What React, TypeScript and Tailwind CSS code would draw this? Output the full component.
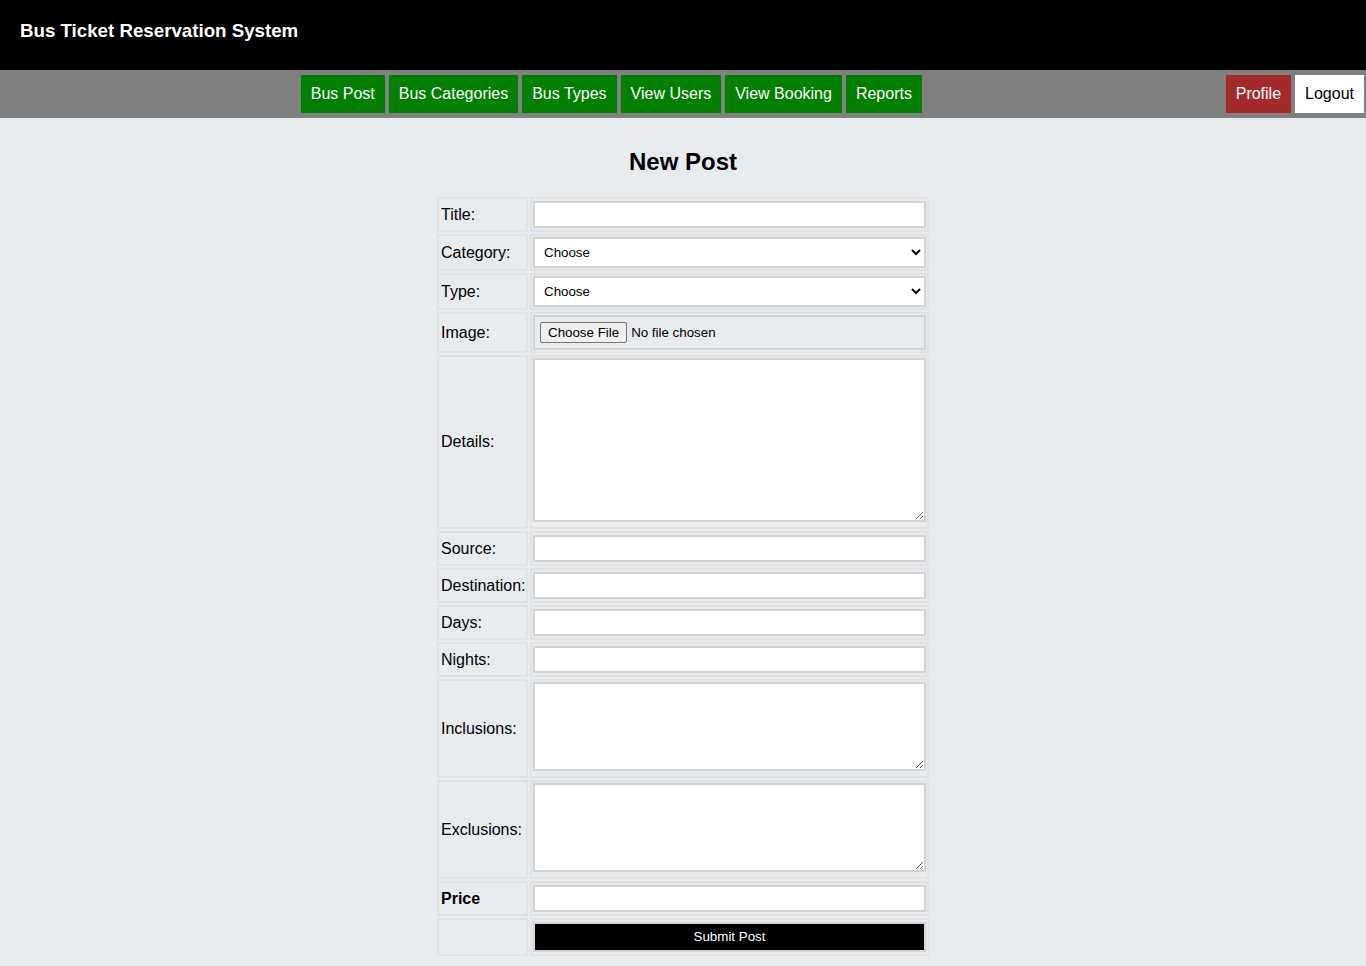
import * as React from "react";

const navLinks = ["Bus Post", "Bus Categories", "Bus Types", "View Users", "View Booking", "Reports"];

const labelCell = "flex items-center border-2 border-[#dfe1e3] pl-[2px] pr-[1px] whitespace-nowrap";
const fieldCell = "border-2 border-[#dfe1e3] px-[1px]";
const textInput = "block w-full h-[27px] border-2 border-[#d3d3d3] bg-white px-1 text-[13.33px] outline-none";
const textArea = "block w-full border-2 border-[#d3d3d3] bg-white px-1 text-[13.33px] outline-none";

function Label({ children, bold }: { children: React.ReactNode; bold?: boolean }) {
  return <div className={labelCell + (bold ? " font-bold" : "")}>{children}</div>;
}

function TextRow({ label, bold }: { label: string; bold?: boolean }) {
  return (
    <>
      <Label bold={bold}>{label}</Label>
      <div className={fieldCell + " py-[2px]"}>
        <input type="text" className={textInput} />
      </div>
    </>
  );
}

function AreaRow({ label, height }: { label: string; height: string }) {
  return (
    <>
      <Label>{label}</Label>
      <div className={fieldCell + " pt-[1px] pb-[5px]"}>
        <textarea className={textArea + " " + height} />
      </div>
    </>
  );
}

function SelectRow({ label }: { label: string }) {
  return (
    <>
      <Label>{label}</Label>
      <div className={fieldCell + " py-[1px]"}>
        <select className="block w-full h-[31px] border-2 border-[#d3d3d3] bg-white pl-[5px] pr-[4px] text-[13.33px] text-black outline-none">
          <option>Choose</option>
        </select>
      </div>
    </>
  );
}

export default function App() {
  return (
    <div className="min-h-[966px] bg-[#e8ebee] text-black font-['Liberation_Sans',Arial,sans-serif]">
      <header className="h-[70px] bg-black pl-[20px] pt-[19px]">
        <h1 className="text-[18.72px] leading-[23px] font-bold text-white">Bus Ticket Reservation System</h1>
      </header>

      <nav className="flex h-[48px] items-center bg-[#808080]">
        <div className="flex flex-1 justify-center gap-[4px]">
          {navLinks.map((l) => (
            <a key={l} href="#" className="flex h-[38px] items-center bg-[#008000] px-[10px] text-[16px] text-white">
              {l}
            </a>
          ))}
        </div>
        <div className="flex gap-[4px] pl-[3px] pr-[2px]">
          <a href="#" className="flex h-[38px] items-center bg-[#a52a2a] px-[10px] text-[16px] text-white">Profile</a>
          <a href="#" className="flex h-[38px] items-center bg-white px-[10px] text-[16px] text-black">Logout</a>
        </div>
      </nav>

      <main className="pt-[30px] pb-[12px]">
        <h2 className="text-center text-[24px] leading-[28px] font-bold">New Post</h2>

        <form className="mx-auto mt-[21px] grid w-[492px] grid-cols-[91px_399px] gap-[2px] text-[16px]">
          <TextRow label="Title:" />
          <SelectRow label="Category:" />
          <SelectRow label="Type:" />

          <Label>Image:</Label>
          <div className={fieldCell + " py-[1px]"}>
            <input
              type="file"
              className="block h-[35px] w-full border-2 border-[#d3d3d3] px-[5px] text-[13.33px] file:mr-[4px] file:mt-[5px] file:h-[21px] file:rounded-[2px] file:border file:border-[#767676] file:bg-[#efefef] file:px-[7px] file:text-black"
            />
          </div>

          <AreaRow label="Details:" height="h-[164px]" />
          <TextRow label="Source:" />
          <TextRow label="Destination:" />
          <TextRow label="Days:" />
          <TextRow label="Nights:" />
          <AreaRow label="Inclusions:" height="h-[89px]" />
          <AreaRow label="Exclusions:" height="h-[89px]" />
          <TextRow label="Price" bold />

          <div className={labelCell} />
          <div className={fieldCell + " py-[2px]"}>
            <button
              type="button"
              className="block h-[30px] w-full border-2 border-[#d3d3d3] bg-black text-[13.33px] text-white"
            >
              Submit Post
            </button>
          </div>
        </form>
      </main>
    </div>
  );
}
